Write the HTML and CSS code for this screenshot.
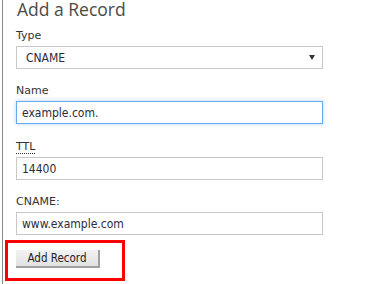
FILE: index.html
```html
<!DOCTYPE html>
<html>
<head>
<meta charset="utf-8">
<link rel="stylesheet" href="styles.css">
</head>
<body>
<div class="panel">
  <h1 class="title">Add a Record</h1>
  <div class="field">
    <label class="label">Type</label>
    <div class="select">
      <span class="select-text">CNAME</span>
      <span class="arrow"></span>
    </div>
  </div>
  <div class="field">
    <label class="label">Name</label>
    <div class="input focus">example.com.</div>
  </div>
  <div class="field field-ttl">
    <label class="label"><abbr class="abbr">TTL</abbr></label>
    <div class="input">14400</div>
  </div>
  <div class="field">
    <label class="label">CNAME:</label>
    <div class="input">www.example.com</div>
  </div>
  <div class="highlight">
    <button class="button">Add Record</button>
  </div>
</div>
</body>
</html>
```
FILE: styles.css
```css
html, body {
  margin: 0;
  padding: 0;
  background: #fff;
  height: 100%;
}
body {
  font-family: "DejaVu Sans", Verdana, sans-serif;
  color: #333;
}
.panel {
  margin-left: 2px;
  border-left: 1px solid #8a8a8a;
  height: 100%;
  padding-left: 13px;
  box-sizing: border-box;
  width: 322px;
}
.title {
  margin: 0;
  font-family: "Open Sans", sans-serif;
  font-weight: 400;
  font-size: 17.5px;
  line-height: 18px;
  color: #4a4a4a;
  padding-left: 1px;
}
.field {
  margin-top: 15px;
}
.title + .field {
  margin-top: 11px;
}
.field-ttl {
  margin-top: 16px;
}
.label {
  display: block;
  font-size: 11px;
  line-height: 14px;
  color: #333;
  margin-bottom: 3px;
}
.abbr {
  text-decoration: none;
  border-bottom: 1px dotted #333;
}
.select, .input {
  box-sizing: border-box;
  height: 23px;
  width: 307px;
  border: 1px solid #c8c8c8;
  display: flex;
  align-items: center;
  font-size: 12px;
  font-stretch: condensed;
  font-family: "DejaVu Sans Condensed", "DejaVu Sans", sans-serif;
  padding-left: 5px;
  color: #2b2b3b;
  background: #fff;
}
.select {
  justify-content: space-between;
  padding-left: 9px;
  padding-right: 7px;
}
.arrow {
  width: 0;
  height: 0;
  border-left: 3px solid transparent;
  border-right: 3px solid transparent;
  border-top: 5px solid #333;
}
.focus {
  border-color: #66aaee;
  box-shadow: 0 0 4px rgba(102, 170, 238, 0.5);
}
.highlight {
  margin-top: 5px;
  margin-left: -11px;
  width: 120px;
  height: 41px;
  box-sizing: border-box;
  border: 3px solid #f00;
  padding: 7px 0 0 8px;
}
.button {
  display: block;
  width: 84px;
  height: 18px;
  padding: 0;
  font-family: "DejaVu Sans Condensed", "DejaVu Sans", sans-serif;
  font-stretch: condensed;
  font-size: 11.5px;
  color: #222;
  background: linear-gradient(#f2f2f2, #e2e2e2);
  border: none;
  border-right: 2px solid #a0a0a0;
  border-bottom: 2px solid #a0a0a0;
}
```
